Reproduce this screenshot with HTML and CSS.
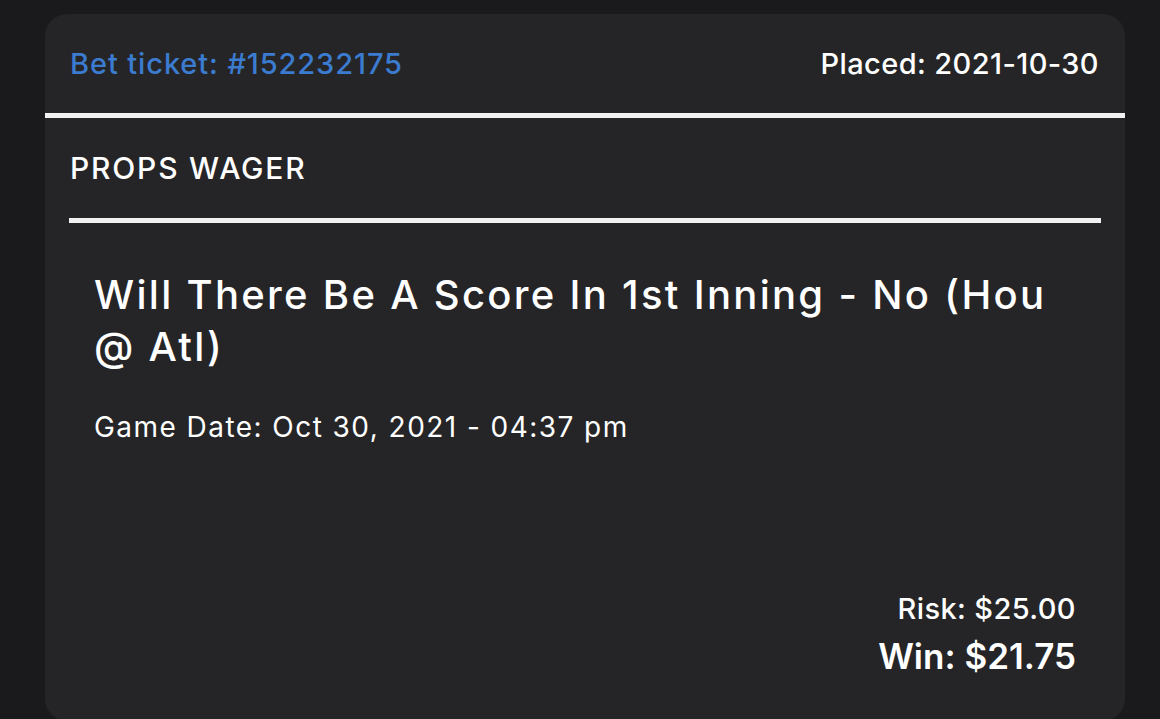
FILE: index.html
```html
<!DOCTYPE html>
<html lang="en">
<head>
    <meta charset="UTF-8">
    <meta name="viewport" content="width=device-width, initial-scale=1.0">
    <title>Bet Ticket #152232175</title>
    <link rel="stylesheet" href="styles.css">
</head>
<body>

    <div class="ticket">
        <div class="ticket-head">
            <span class="ticket-id">Bet ticket: #152232175</span>
            <span class="placed">Placed: 2021-10-30</span>
        </div>

        <div class="wager">
            <div class="wager-type">PROPS WAGER</div>

            <div class="wager-body">
                <h2 class="selection">Will There Be A Score In 1st Inning - No (Hou @ Atl)</h2>
                <p class="game-date">Game Date: Oct 30, 2021 - 04:37 pm</p>

                <div class="amounts">
                    <div class="risk">Risk: $25.00</div>
                    <div class="win">Win: $21.75</div>
                </div>
            </div>
        </div>
    </div>

</body>
</html>
```

FILE: styles.css
```css
html, body {
    height: 100%;
}

body {
    font-family: 'Inter', 'Liberation Sans', sans-serif;
    background: #1a1a1c;
    color: #fff;
    margin: 0;
    padding: 14px 35px 0 45px;
    box-sizing: border-box;
    overflow: hidden;
}

.ticket {
    height: 707px;
    background: #252527;
    border-radius: 22px;
    display: flex;
    flex-direction: column;
}

.ticket-head {
    height: 99px;
    padding: 0 26px 0 25px;
    display: flex;
    justify-content: space-between;
    align-items: center;
    border-bottom: 5px solid #f1f1f1;
    font-size: 29px;
    font-weight: 500;
}

.ticket-id {
    color: #3b7bd0;
    letter-spacing: 0.9px;
}

.placed {
    letter-spacing: 0.4px;
}

.wager {
    flex: 1;
    padding: 0 24px;
    display: flex;
    flex-direction: column;
}

.wager-type {
    height: 100px;
    display: flex;
    align-items: center;
    padding-left: 1px;
    border-bottom: 5px solid #f1f1f1;
    font-size: 30px;
    font-weight: 500;
    letter-spacing: 1.8px;
}

.wager-body {
    flex: 1;
    padding: 0 25px 43px;
    display: flex;
    flex-direction: column;
}

.selection {
    margin: 46px 0 0;
    font-size: 40px;
    line-height: 52px;
    font-weight: 500;
    letter-spacing: 2.3px;
}

.game-date {
    margin: 36px 0 0;
    font-size: 28px;
    line-height: 36px;
    letter-spacing: 1.45px;
}

.amounts {
    margin-top: auto;
    text-align: right;
    font-weight: 500;
}

.risk {
    font-size: 29px;
    line-height: 36px;
    letter-spacing: 0.4px;
}

.win {
    margin-top: 7px;
    font-size: 35px;
    line-height: 44px;
    font-weight: 600;
}
```
